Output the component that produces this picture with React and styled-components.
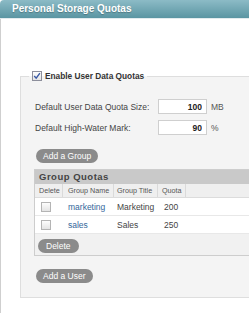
import styled, { createGlobalStyle } from "styled-components";

const GlobalStyle = createGlobalStyle`
  html, body {
    margin: 0;
    padding: 0;
    background: #fff;
    overflow: hidden;
  }
  body {
    font-family: "Liberation Sans", Arial, sans-serif;
  }
`;

const Page = styled.div`
  width: 300px;
`;

const Header = styled.div`
  height: 18px;
  padding-left: 12px;
  background: linear-gradient(#8cbbc6, #5a95a2);
  border-top-left-radius: 4px;
  border-bottom: 1px solid #e2ebee;
`;

const Title = styled.h1`
  margin: 0;
  font-size: 10px;
  font-weight: bold;
  line-height: 18px;
  color: #fff;
  text-shadow: 0 1px 1px rgba(0, 0, 0, 0.25);
`;

const Body = styled.div`
  border-left: 1px solid #cfcfcf;
  padding: 50px 0 16px 19px;
`;

const Fieldset = styled.fieldset`
  margin: 0;
  padding: 0;
  min-width: 0;
  border: 1px solid #dedede;
  background: #f4f4f4;
`;

const Legend = styled.legend`
  margin-left: 8px;
  padding: 1px 3px;
`;

const LegendInner = styled.span`
  display: flex;
  align-items: center;
  gap: 3px;
  height: 12px;
  font-size: 8.3px;
  font-weight: bold;
  color: #333;
`;

const Box = styled.span`
  display: inline-flex;
  align-items: center;
  justify-content: center;
  box-sizing: border-box;
  width: 10px;
  height: 10px;
  border: 1px solid ${(p) => (p.$checked ? "#8d8f9c" : "#b4b4b4")};
  background: linear-gradient(#fdfdfd, #e4e4e4);
`;

const Inner = styled.div`
  padding: 16px 13px 14px 13px;
`;

const FormGrid = styled.div`
  display: grid;
  grid-template-columns: 120px 49px auto;
  column-gap: 4px;
  row-gap: 6px;
  align-items: center;
  width: max-content;
`;

const Label = styled.label`
  padding-left: 1px;
  font-size: 8.5px;
  color: #444;
`;

const NumInput = styled.input`
  box-sizing: border-box;
  width: 49px;
  height: 15px;
  margin: 0;
  padding: 0 4px;
  border: 1px solid #cfcfcf;
  background: #fff;
  text-align: right;
  font-family: "Liberation Sans", Arial, sans-serif;
  font-size: 8.5px;
  font-weight: bold;
  color: #222;
`;

const Unit = styled.span`
  font-size: 8.5px;
  color: #555;
`;

const Pill = styled.button`
  display: block;
  height: 14px;
  margin: ${(p) => p.$top || 0}px 0 0 ${(p) => (p.$flush ? 0 : 2)}px;
  padding: 0 ${(p) => p.$pad || 7}px;
  border: none;
  border-radius: 7px;
  background: #8b8b8b;
  color: #fff;
  font-family: "Liberation Sans", Arial, sans-serif;
  font-size: 8.5px;
  line-height: 14px;
  cursor: pointer;
`;

const Table = styled.div`
  margin-top: 6px;
  border: 1px solid #cdcdcd;
  background: #fff;
`;

const TableTitle = styled.div`
  height: 14px;
  line-height: 14px;
  padding-left: 4px;
  background: #c9c9c9;
  font-size: 9.5px;
  font-weight: bold;
  letter-spacing: 0.5px;
  color: #444;
`;

const cols = "28px 51px 44px 28px 1fr";

const HeadRow = styled.div`
  display: grid;
  grid-template-columns: ${cols};
  height: 13px;
  border-bottom: 1px solid #dcdcdc;
  background: #efefef;
`;

const HeadCell = styled.div`
  padding-left: ${(p) => p.$pad}px;
  border-right: ${(p) => (p.$last ? "none" : "1px solid #dadada")};
  font-size: 7.2px;
  line-height: 13px;
  color: #555;
`;

const Row = styled.div`
  display: grid;
  grid-template-columns: ${cols};
  align-items: center;
  height: 17px;
  border-bottom: 1px solid #e8e8e8;
  font-size: 8.5px;
  color: #444;
`;

const Cell = styled.div`
  display: flex;
  align-items: center;
  padding-left: ${(p) => p.$pad}px;
`;

const GroupLink = styled.a`
  color: #34679b;
  text-decoration: none;
`;

const Footer = styled.div`
  padding: 5px 0 2px 3px;
  background: #f1f1f1;
`;

const groups = [
  { name: "marketing", title: "Marketing", quota: 200 },
  { name: "sales", title: "Sales", quota: 250 },
];

const Check = () => (
  <svg width="8" height="8" viewBox="0 0 8 8">
    <path d="M1.2 4 L3.2 6.2 L6.9 1.2" fill="none" stroke="#3a5aa6" strokeWidth="1.4" />
  </svg>
);

const App = () => {
  return (
    <Page>
      <GlobalStyle />
      <Header>
        <Title>Personal Storage Quotas</Title>
      </Header>
      <Body>
        <Fieldset>
          <Legend>
            <LegendInner>
              <Box $checked>
                <Check />
              </Box>
              Enable User Data Quotas
            </LegendInner>
          </Legend>
          <Inner>
            <FormGrid>
              <Label>Default User Data Quota Size:</Label>
              <NumInput defaultValue="100" />
              <Unit>MB</Unit>
              <Label>Default High-Water Mark:</Label>
              <NumInput defaultValue="90" />
              <Unit>%</Unit>
            </FormGrid>
            <Pill $top={14}>Add a Group</Pill>
            <Table>
              <TableTitle>Group Quotas</TableTitle>
              <HeadRow>
                <HeadCell $pad={4}>Delete</HeadCell>
                <HeadCell $pad={5}>Group Name</HeadCell>
                <HeadCell $pad={3}>Group Title</HeadCell>
                <HeadCell $pad={4}>Quota</HeadCell>
                <HeadCell $last />
              </HeadRow>
              {groups.map((g) => (
                <Row key={g.name}>
                  <Cell $pad={6}>
                    <Box />
                  </Cell>
                  <Cell $pad={5}>
                    <GroupLink href="#">{g.name}</GroupLink>
                  </Cell>
                  <Cell $pad={3}>{g.title}</Cell>
                  <Cell $pad={6}>{g.quota}</Cell>
                  <Cell />
                </Row>
              ))}
              <Footer>
                <Pill $flush $pad={8}>Delete</Pill>
              </Footer>
            </Table>
            <Pill $top={13}>Add a User</Pill>
          </Inner>
        </Fieldset>
      </Body>
    </Page>
  );
};

export default App;
